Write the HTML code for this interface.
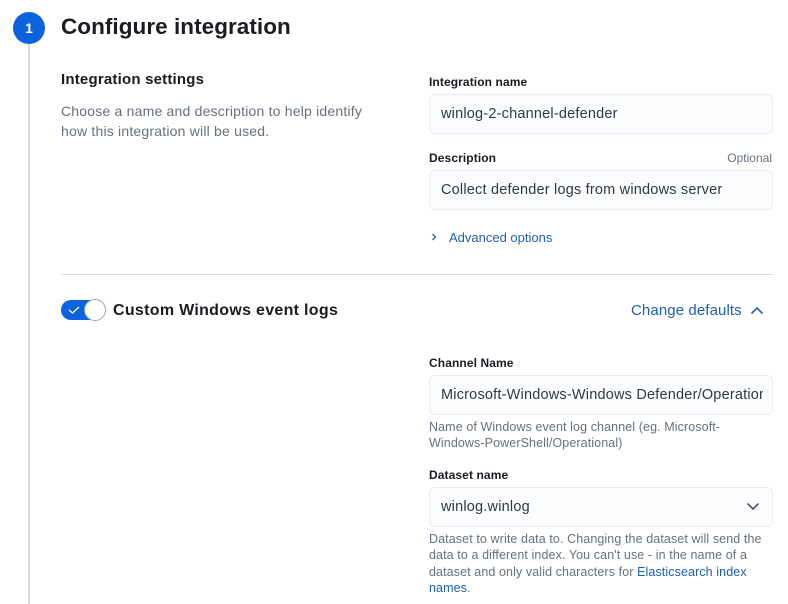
<!DOCTYPE html>
<html><head><style>
*{box-sizing:border-box;margin:0;padding:0}
body{width:788px;height:592px;overflow:hidden;background:#fff;font-family:"Liberation Sans",sans-serif;color:#1a1c21;position:relative}
.a{position:absolute}
.line{left:28px;top:44px;width:2px;height:560px;background:#d3dae6}
.circ{left:13px;top:12px;width:32px;height:32px;border-radius:50%;background:#0b64dd;color:#fff;font-size:14px;font-weight:bold;text-align:center;line-height:32px}
h1{position:absolute;left:61px;top:14px;font-size:22.5px;font-weight:bold;color:#1a1c21;letter-spacing:0.05px}
h2{position:absolute;left:61px;top:71px;font-size:15px;font-weight:bold;letter-spacing:0.2px}
.desc{left:61px;top:101px;font-size:14px;line-height:20px;color:#69707d;width:318px;letter-spacing:0.2px}
.lbl{left:429px;font-size:12px;font-weight:bold;color:#1a1c21;letter-spacing:0.1px}
.opt{right:16px;font-size:12px;color:#69707d}
.inp{left:429px;width:344px;height:40px;background:#fbfcfd;border:1px solid #e9edf3;border-radius:6px;font-size:14.5px;line-height:39px;padding-left:11px;color:#343741;white-space:nowrap;letter-spacing:0.2px}
.inp span{display:block;width:322px;overflow:hidden}
.help{left:429px;width:344px;font-size:12.5px;line-height:16.3px;color:#69707d;letter-spacing:0.1px}
.link{color:#1d5fb0}
</style></head><body>
<div class="a line"></div>
<div class="a circ">1</div>
<h1>Configure integration</h1>
<h2>Integration settings</h2>
<div class="a desc">Choose a name and description to help identify how this integration will be used.</div>

<div class="a lbl" style="top:75px">Integration name</div>
<div class="a inp" style="top:94px"><span>winlog-2-channel-defender</span></div>
<div class="a lbl" style="top:151px">Description</div>
<div class="a opt" style="top:151px">Optional</div>
<div class="a inp" style="top:170px"><span>Collect defender logs from windows server</span></div>
<div class="a" style="left:429px;top:230px;font-size:13px;color:#1d5fb0"><svg width="10" height="10" viewBox="0 0 10 10" style="margin-right:10px"><path d="M3.5 2 L6.5 5 L3.5 8" fill="none" stroke="#1d5fb0" stroke-width="1.3"/></svg>Advanced options</div>

<div class="a" style="left:61px;top:274px;width:712px;height:1px;background:#d3dae6"></div>

<div class="a" style="left:61px;top:300px;width:44px;height:20px;border-radius:10px;background:#0b64dd"></div>
<svg class="a" style="left:67px;top:304px" width="14" height="12" viewBox="0 0 14 12"><path d="M2 6 L5.5 9 L12 3" fill="none" stroke="#fff" stroke-width="1.3"/></svg>
<div class="a" style="left:84px;top:299px;width:22px;height:22px;border-radius:50%;background:#fff;border:1px solid #98a2b3"></div>
<div class="a" style="left:113px;top:302px;font-size:16px;font-weight:bold;letter-spacing:0.3px">Custom Windows event logs</div>

<div class="a" style="left:631px;top:302px;font-size:15px;color:#1d5fb0;letter-spacing:0.1px">Change defaults</div>
<svg class="a" style="left:749px;top:305px" width="16" height="12" viewBox="0 0 16 12"><path d="M2.5 8.5 L8 3 L13.5 8.5" fill="none" stroke="#1d5fb0" stroke-width="1.6"/></svg>

<div class="a lbl" style="top:356px">Channel Name</div>
<div class="a inp" style="top:375px"><span>Microsoft-Windows-Windows Defender/Operational</span></div>
<div class="a help" style="top:419px">Name of Windows event log channel (eg. Microsoft-Windows-PowerShell/Operational)</div>

<div class="a lbl" style="top:468px">Dataset name</div>
<div class="a inp" style="top:487px"><span>winlog.winlog</span></div>
<svg class="a" style="left:745px;top:500px" width="16" height="12" viewBox="0 0 16 12"><path d="M2.5 3.5 L8 9 L13.5 3.5" fill="none" stroke="#343741" stroke-width="1.4"/></svg>
<div class="a help" style="top:531px">Dataset to write data to. Changing the dataset will send the data to a different index. You can't use - in the name of a dataset and only valid characters for <span class="link">Elasticsearch index names</span>.</div>
</body></html>
